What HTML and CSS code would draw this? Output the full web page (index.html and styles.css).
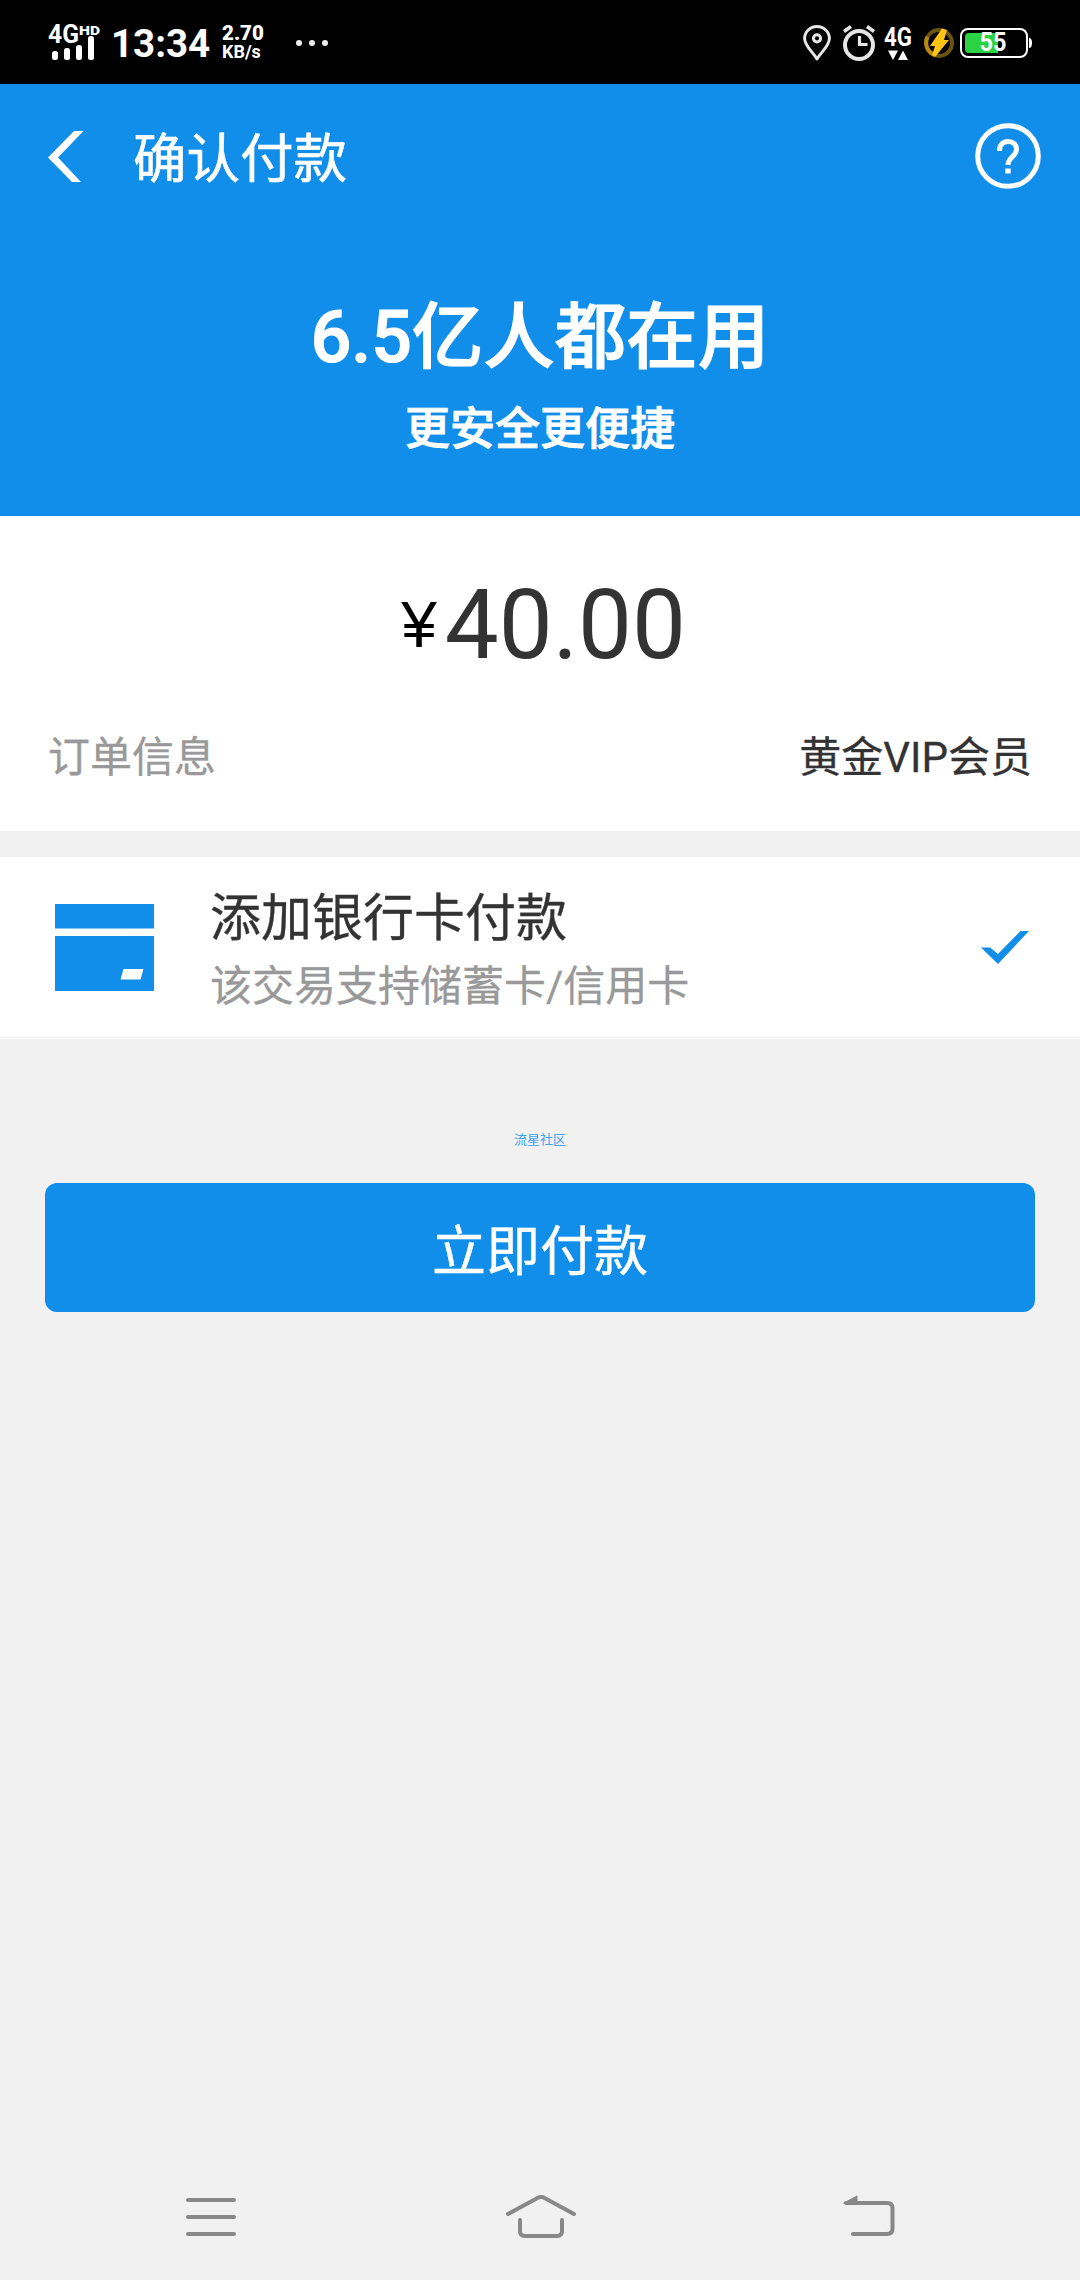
FILE: index.html
```html
<!DOCTYPE html>
<html lang="zh-CN">
<head>
  <meta charset="UTF-8" />
  <title>确认付款</title>
  <meta name="viewport" content="width=device-width, initial-scale=1.0" />
  <link rel="stylesheet" href="styles.css">
</head>
<body>

  <div class="status-bar">
    <div class="status-left">
      <svg class="signal" width="54" height="48" viewBox="0 -6 54 48" fill="#fff">
        <text x="0" y="18" font-size="25" textLength="31" lengthAdjust="spacingAndGlyphs">4G</text>
        <text class="hd" x="31" y="10" font-size="13.500" textLength="21" lengthAdjust="spacingAndGlyphs">HD</text>
        <rect x="4" y="26" width="6" height="9" rx="2.5" />
        <rect x="16" y="23" width="6" height="12" rx="2.5" />
        <rect x="28" y="20" width="6" height="15" rx="2.5" />
        <rect x="40" y="11" width="6" height="24" rx="2.5" />
      </svg>
      <span class="time">13:34</span>
      <span class="speed"><b>2.70</b><small>KB/s</small></span>
      <svg class="dots" width="34" height="8" viewBox="0 0 34 8" fill="#eee">
        <circle cx="4" cy="4" r="3" />
        <circle cx="17" cy="4" r="3" />
        <circle cx="30" cy="4" r="3" />
      </svg>
    </div>
    <div class="status-right">
      <svg width="28" height="36" viewBox="0 0 28 36" fill="none" stroke="#e6e6e6" stroke-width="3">
        <path d="M14 34C10 27 1.6 21 1.6 13.5a12.4 12 0 0 1 24.8 0C26.400 21 18 27 14 34z" stroke-linejoin="round" />
        <circle cx="14" cy="13.300" r="3.600" />
      </svg>
      <svg class="alarm" width="32" height="36" viewBox="0 0 32 36" fill="none" stroke="#e6e6e6">
        <circle cx="16" cy="20" r="14" stroke-width="4" />
        <path d="M16.500 11v8.500h8" stroke-width="3.200" />
        <path d="M1 6.500l7-5M31 6.500l-7-5" stroke-width="3.500" />
      </svg>
      <svg class="net" width="28" height="44" viewBox="0 -5 28 44" fill="#fff">
        <text x="0" y="20" font-size="25" textLength="28" lengthAdjust="spacingAndGlyphs">4G</text>
        <path d="M4 24.500h10l-5 9.500zM14 34h10l-5-9.500z" />
      </svg>
      <svg class="charge" width="30" height="32" viewBox="0 0 30 32">
        <circle cx="15" cy="16" r="13" fill="none" stroke="#6b5410" stroke-width="4" />
        <path d="M11 28A13 13 0 0 1 3.500 10" fill="none" stroke="#b98a10" stroke-width="4" />
        <path d="M18 1.500l5 1.500-3 10h5L11 30l-3-2 3-9H6z" fill="#ffc414" />
      </svg>
      <svg class="battery" width="73" height="32" viewBox="0 0 73 32">
        <rect x="1" y="2" width="66" height="28" rx="7" fill="none" stroke="#fff" stroke-width="2" />
        <path d="M5 10a4 4 0 0 1 4-4h29v20H9a4 4 0 0 1-4-4z" fill="#2bd244" />
        <path d="M69 11q3 0 3 5t-3 5z" fill="#fff" />
        <text x="19.500" y="24" font-size="25" fill="#fff" textLength="27" lengthAdjust="spacingAndGlyphs">55</text>
      </svg>
    </div>
  </div>

  <div class="top">
    <div class="title-bar">
      <svg class="back" width="36" height="52" viewBox="0 0 36 52" fill="#fff">
        <path d="M26 0h9.500L10 26.500 33 51h-9L0 26.500z" />
      </svg>
      <h1>确认付款</h1>
      <svg class="help" width="66" height="66" viewBox="0 0 66 66" fill="none" stroke="#fff">
        <circle cx="33" cy="33" r="30.300" stroke-width="5" />
        <path d="M24.500 28c0-6.500 3.500-9.500 8.500-9.500s8.500 3 8.500 8c0 7-8.500 7.500-8.500 15.500" stroke-width="5" />
        <path d="M30.300 48h5.400" stroke-width="5" />
      </svg>
    </div>
    <p class="slogan">6.5亿人都在用</p>
    <p class="slogan-sub">更安全更便捷</p>
  </div>

  <div class="order">
    <div class="amount"><span class="yen">¥</span><span>40.00</span></div>
    <div class="order-row">
      <span class="label">订单信息</span>
      <span>黄金VIP会员</span>
    </div>
  </div>

  <div class="method">
    <svg class="card-icon" width="99" height="87" viewBox="0 0 99 87">
      <path d="M0 0h99v24.500H0zM0 32h99v55H0z" fill="#118eea" />
      <path d="M68.500 65h20l-3 10.500h-20z" fill="#fff" />
    </svg>
    <div class="method-text">
      <div class="method-name">添加银行卡付款</div>
      <div class="method-desc">该交易支持储蓄卡/信用卡</div>
    </div>
    <svg class="check" width="48" height="33" viewBox="0 0 48 33" fill="#118eea">
      <path d="M0 16.500h9L17 23 39.500 0H48L17 33z" />
    </svg>
  </div>

  <p class="community">流星社区</p>
  <button class="pay">立即付款</button>

  <div class="nav-bar">
    <svg width="50" height="44" viewBox="0 0 50 44" stroke="#888" stroke-width="4" stroke-linecap="round">
      <path d="M2 5h46M2 22h46M2 39h46" />
    </svg>
    <svg class="home" width="70" height="44" viewBox="0 0 70 44" fill="none" stroke="#888" stroke-width="4" stroke-linecap="round">
      <path d="M2 19L31 3.200q4-2.200 8 0L68 19" />
      <path d="M14 25v11q0 5 5 5h32q5 0 5-5V25" />
    </svg>
    <svg width="52" height="44" viewBox="0 0 52 44" fill="none" stroke="#888" stroke-width="4" stroke-linecap="round">
      <path d="M3 8h41q5.500 0 5.500 5v21q0 5-5.500 5H10" />
      <path d="M1 8L14 1v8z" fill="#888" stroke-width="1" />
    </svg>
  </div>

</body>
</html>
```
FILE: styles.css
```css
* {
  box-sizing: border-box;
}

body {
  margin: 0;
  min-height: 2280px;
  display: flex;
  flex-direction: column;
  font-family: Roboto, "Noto Sans CJK SC", sans-serif;
  background: #f1f1f1;
  color: #333;
}

h1,
p {
  margin: 0;
}

svg {
  display: block;
  flex-shrink: 0;
  overflow: visible;
}

.status-bar {
  height: 84px;
  padding: 1px 48px 0;
  display: flex;
  justify-content: space-between;
  align-items: center;
  background: #000;
  color: #fff;
  font-weight: 700;
}

.status-left,
.status-right {
  display: flex;
  align-items: center;
}

.status-bar text {
  font-weight: 700;
}

.status-bar .hd {
  font-weight: 900;
}

.time {
  width: 98px;
  margin-left: 9px;
  padding-top: 2px;
  font-size: 38.5px;
  line-height: 44px;
}

.speed {
  width: 42px;
  margin-left: 13px;
  display: flex;
  flex-direction: column;
}

.speed b {
  font-size: 20.5px;
  line-height: 18px;
}

.speed small {
  font-size: 18px;
  line-height: 19px;
}

.dots {
  margin-left: 31px;
}

.alarm {
  margin-left: 12px;
}

.net {
  margin-left: 9px;
}

.charge {
  margin-left: 12px;
}

.battery {
  margin-left: 6px;
  margin-right: -1px;
}

.top {
  height: 432px;
  background: #118eea;
  color: #fff;
  text-align: center;
}

.title-bar {
  height: 144px;
  padding: 0 39px 0 48px;
  display: flex;
  align-items: center;
}

.back {
  margin-top: 2px;
}

.title-bar h1 {
  flex: 1;
  margin-left: 49px;
  padding-top: 7px;
  font-size: 53.5px;
  font-weight: 400;
  line-height: 70px;
  text-align: left;
  -webkit-text-stroke: 0.6px;
}

.slogan {
  margin-top: 60px;
  font-size: 71.5px;
  font-weight: 500;
  line-height: 100px;
  -webkit-text-stroke: 1.2px;
}

.slogan-sub {
  margin-top: 12px;
  font-size: 45px;
  font-weight: 500;
  line-height: 60px;
  -webkit-text-stroke: 0.8px;
}

.order {
  height: 315px;
  padding: 53px 48px 0;
  background: #fff;
}

.amount {
  padding-left: 7px;
  display: flex;
  justify-content: center;
  font-size: 96px;
  line-height: 112px;
}

.yen {
  margin-right: 8px;
  color: #000;
  font-family: "Liberation Sans", sans-serif;
  font-size: 64px;
}

.order-row {
  margin-top: 47px;
  display: flex;
  justify-content: space-between;
  font-size: 42px;
  line-height: 60px;
  -webkit-text-stroke: 0.3px;
}

.label,
.method-desc {
  color: #999;
}

.method {
  height: 182px;
  margin-top: 26px;
  padding: 0 51px 0 55px;
  display: flex;
  align-items: center;
  background: #fff;
  border-bottom: 1px solid #fff;
  box-shadow: inset 0 -1px #ececec;
}

.method-text {
  flex: 1;
  margin-left: 56px;
  padding-top: 11px;
  -webkit-text-stroke: 0.3px;
}

.method-name {
  font-size: 51px;
  line-height: 60px;
}

.method-desc {
  margin-top: 8px;
  font-size: 42px;
  line-height: 60px;
}

.community {
  margin-top: 91px;
  color: #3fa2f0;
  font-size: 13px;
  line-height: 20px;
  text-align: center;
}

.pay {
  height: 129px;
  margin: 33px 45px 0;
  padding: 0;
  border: none;
  border-radius: 12px;
  background: #118eea;
  color: #fff;
  font-family: inherit;
  font-size: 54px;
  -webkit-text-stroke: 0.4px;
}

.nav-bar {
  margin-top: auto;
  padding: 0 185px 41px 186px;
  display: flex;
  justify-content: space-between;
}

.home {
  margin-left: 2px;
}
```
